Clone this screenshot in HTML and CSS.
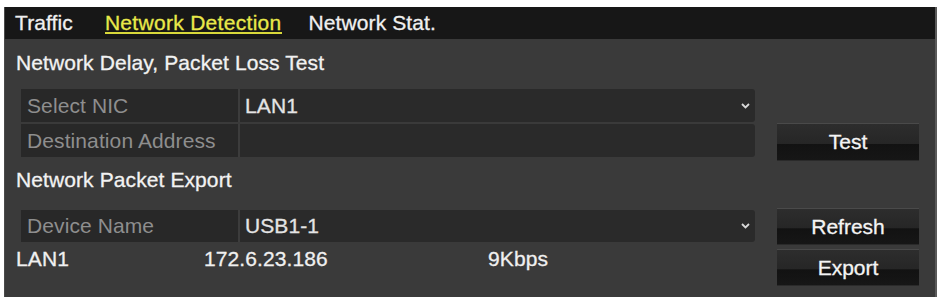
FILE: index.html
```html
<!DOCTYPE html>
<html>
<head>
<meta charset="utf-8">
<link rel="stylesheet" href="styles.css">
</head>
<body>
<div class="panel">
  <nav class="tabs">
    <span class="tab">Traffic</span>
    <span class="tab active">Network Detection</span>
    <span class="tab">Network Stat.</span>
  </nav>
  <div class="content">
    <div class="title t1">Network Delay, Packet Loss Test</div>
    <div class="row r1">
      <div class="field">
        <span class="label">Select NIC</span>
        <span class="value">LAN1
          <svg class="chev" width="9" height="6" viewBox="0 0 9 6"><path d="M1 1 L4.5 4.5 L8 1" fill="none" stroke="#d8d8d8" stroke-width="1.8"/></svg>
        </span>
      </div>
      <div class="side"></div>
    </div>
    <div class="row r2">
      <div class="field">
        <span class="label">Destination Address</span>
        <span class="value"></span>
      </div>
      <div class="side"><button class="btn test">Test</button></div>
    </div>
    <div class="title t2">Network Packet Export</div>
    <div class="row r3">
      <div class="field">
        <span class="label">Device Name</span>
        <span class="value">USB1-1
          <svg class="chev" width="9" height="6" viewBox="0 0 9 6"><path d="M1 1 L4.5 4.5 L8 1" fill="none" stroke="#d8d8d8" stroke-width="1.8"/></svg>
        </span>
      </div>
      <div class="side"><button class="btn">Refresh</button></div>
    </div>
    <div class="row r4">
      <div class="info">
        <span class="c1">LAN1</span>
        <span class="c2">172.6.23.186</span>
        <span class="c3">9Kbps</span>
      </div>
      <div class="side"><button class="btn">Export</button></div>
    </div>
  </div>
</div>
</body>
</html>
```

FILE: styles.css
```css
* { box-sizing: border-box; }
body {
  margin: 0;
  background: #ffffff;
  font-family: "Liberation Sans", Arial, sans-serif;
}
.panel {
  margin: 7px 0 0 4px;
  width: 933px;
  height: 290px;
  background: #3a3a3a;
  border-right: 2px solid #5a5a5a;
  border-left: 1px solid #4a4a4a;
  display: flex;
  flex-direction: column;
}
.tabs {
  height: 32px;
  background: #171717;
  display: flex;
  align-items: stretch;
  padding-left: 10px;
}
.tab {
  font-size: 21px;
  color: #f0f0f0;
  line-height: 32px;
  position: relative;
  letter-spacing: 0.1px;
  -webkit-text-stroke: 0.3px #f0f0f0;
}
.tab:nth-child(1) { margin-right: 32px; }
.tab:nth-child(2) { margin-right: 27px; letter-spacing: 0.3px; }
.tab.active {
  color: #e9e94a;
  -webkit-text-stroke: 0.3px #e9e94a;
}
.tab.active::after {
  content: "";
  position: absolute;
  left: 0;
  right: 0;
  top: 25px;
  height: 2px;
  background: #d8d83a;
}
.content {
  padding-left: 11px;
  display: flex;
  flex-direction: column;
}
.title {
  font-size: 21px;
  color: #f2f2f2;
  letter-spacing: 0.1px;
  -webkit-text-stroke: 0.3px #f2f2f2;
}
.t1 { height: 50px; line-height: 47px; }
.t2 { height: 51px; line-height: 46px; }
.row {
  display: flex;
  gap: 22px;
}
.r1 { height: 33px; }
.r2 { height: 33px; margin-top: 2px; }
.r3 { height: 36px; }
.r4 { height: 35px; margin-top: 5px; }
.field {
  width: 734px;
  margin-left: 5px;
  display: flex;
  background: #2a2a2a;
  border-radius: 3px;
}
.r3 .field { height: 32px; margin-top: 2px; }
.label {
  width: 219px;
  background: #282828;
  border-right: 2px solid #3c3c3c;
  color: #8e8e8e;
  font-size: 21px;
  padding-left: 6px;
  display: flex;
  align-items: center;
  letter-spacing: 0.1px;
}
.value {
  flex: 1;
  color: #e4e4e4;
  font-size: 21px;
  padding-left: 5px;
  display: flex;
  align-items: center;
  justify-content: space-between;
  padding-right: 5px;
  letter-spacing: 0.1px;
  -webkit-text-stroke: 0.3px #e4e4e4;
}
.side {
  width: 142px;
  display: flex;
}
.btn {
  width: 142px;
  height: 36px;
  border: none;
  border-top: 1px solid #4a4a4a;
  background: linear-gradient(#2d2d2d 0%, #262626 55%, #121212 56%, #161616 100%);
  color: #f4f4f4;
  font-family: "Liberation Sans", Arial, sans-serif;
  font-size: 21px;
  padding: 0;
  box-shadow: 0 1px 0 #2a2a2a;
  -webkit-text-stroke: 0.3px #f4f4f4;
}
.test { margin-top: -1px; height: 37px; }
.info {
  width: 739px;
  display: flex;
  font-size: 21px;
  color: #f0f0f0;
  line-height: 20px;
  letter-spacing: 0.1px;
  -webkit-text-stroke: 0.3px #f0f0f0;
}
.c1 { width: 188px; }
.c2 { width: 284px; }
```
